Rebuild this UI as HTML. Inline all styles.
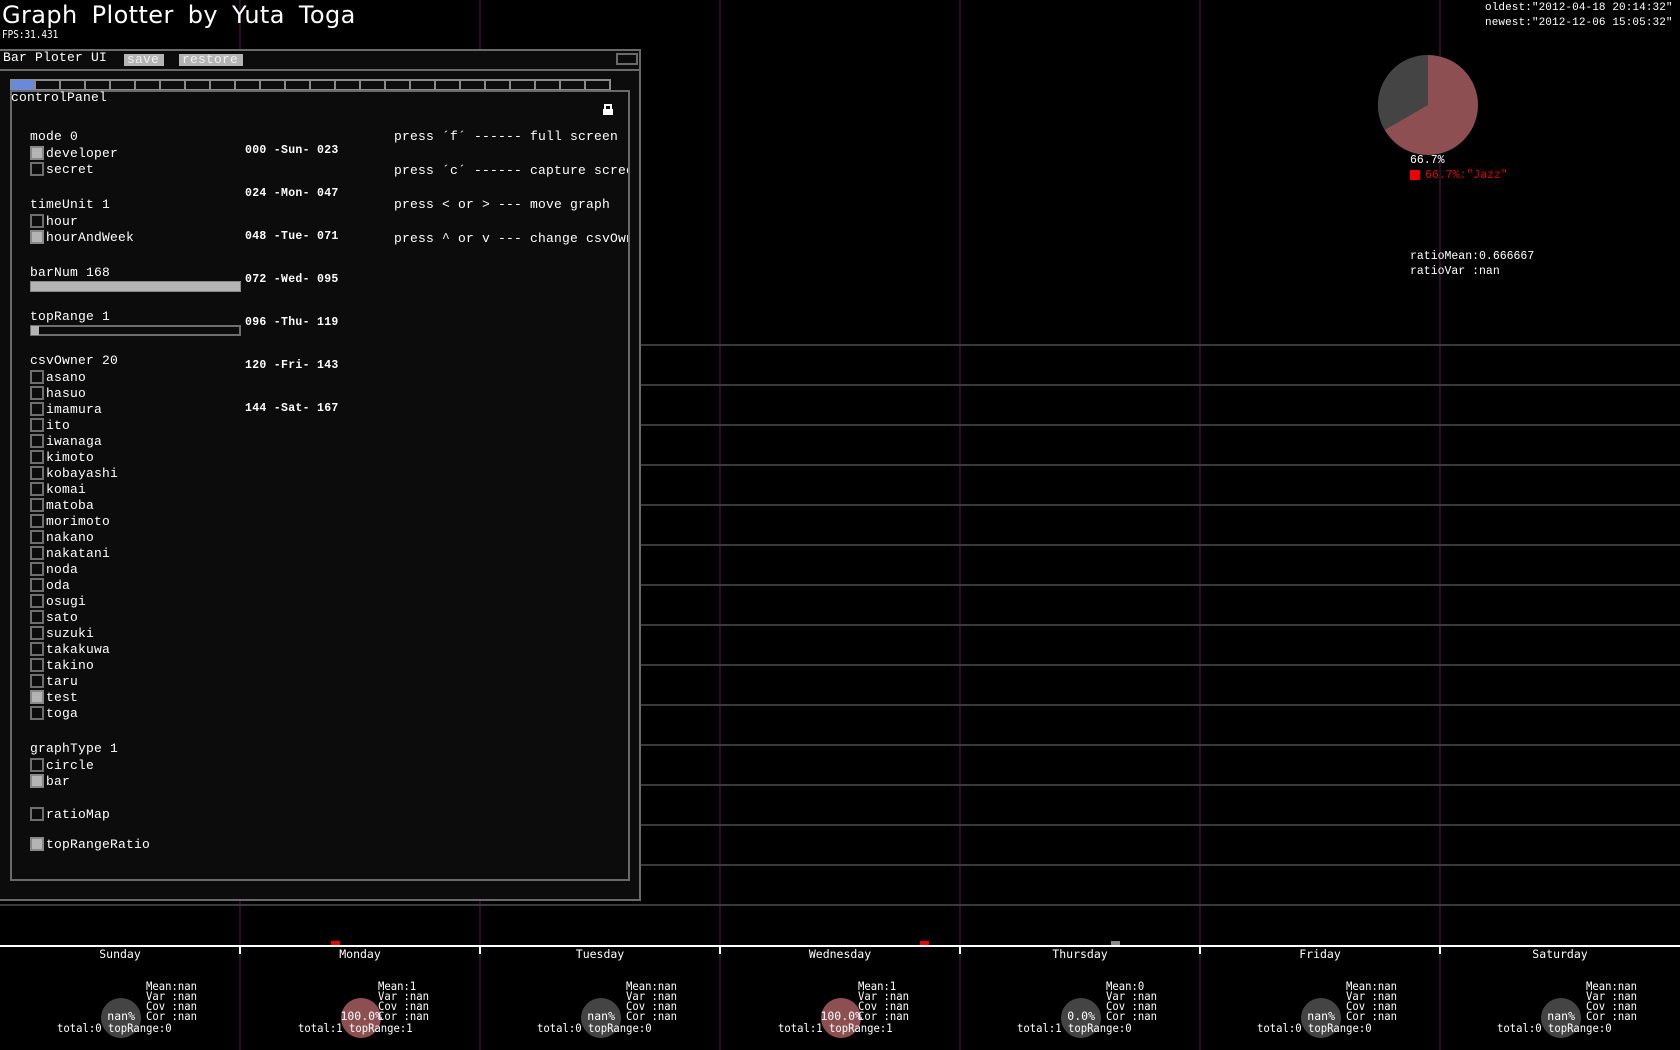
<!DOCTYPE html>
<html><head><meta charset="utf-8"><style>
*{margin:0;padding:0;box-sizing:border-box}
body{width:1680px;height:1050px;background:#000;position:relative;overflow:hidden;color:#fff;font-family:"Liberation Mono","DejaVu Sans Mono",monospace}
.a{position:absolute;white-space:pre}
.vl{position:absolute;top:0;width:2px;height:1050px;background:#2e0a2e}
.hl{position:absolute;height:2px;background:#3a3a3a}
.t{font-size:13px;line-height:14px;letter-spacing:0.2px}
.cb{position:absolute;width:14px;height:14px;border:2px solid #6e6e6e;background:#0c0c0c}
.cb.on{background:#b4b4b4;border-color:#888}
.m{font-size:11.5px;line-height:14px;font-weight:bold;letter-spacing:0.3px}
.s{font-size:11.5px;line-height:10px;font-family:"DejaVu Sans Mono","Liberation Mono",monospace;transform:scaleX(0.92);transform-origin:left top}
.d{position:absolute;top:948px;width:240px;text-align:center;font-size:11.5px;line-height:12px;font-family:"DejaVu Sans Mono","Liberation Mono",monospace}
.p{position:absolute;top:1011px;width:100px;text-align:right;font-size:11.5px;line-height:10px;font-family:"DejaVu Sans Mono","Liberation Mono",monospace}
</style></head><body>
<div class="vl" style="left:239px"></div><div class="vl" style="left:479px"></div><div class="vl" style="left:719px"></div><div class="vl" style="left:959px"></div><div class="vl" style="left:1199px"></div><div class="vl" style="left:1439px"></div>

<div class="hl" style="left:640px;width:1040px;top:344px"></div>
<div class="hl" style="left:640px;width:1040px;top:384px"></div>
<div class="hl" style="left:640px;width:1040px;top:424px"></div>
<div class="hl" style="left:640px;width:1040px;top:464px"></div>
<div class="hl" style="left:640px;width:1040px;top:504px"></div>
<div class="hl" style="left:640px;width:1040px;top:544px"></div>
<div class="hl" style="left:640px;width:1040px;top:584px"></div>
<div class="hl" style="left:640px;width:1040px;top:624px"></div>
<div class="hl" style="left:640px;width:1040px;top:664px"></div>
<div class="hl" style="left:640px;width:1040px;top:704px"></div>
<div class="hl" style="left:640px;width:1040px;top:744px"></div>
<div class="hl" style="left:640px;width:1040px;top:784px"></div>
<div class="hl" style="left:640px;width:1040px;top:824px"></div>
<div class="hl" style="left:640px;width:1040px;top:864px"></div>
<div class="hl" style="left:0;width:1680px;top:904px"></div>

<div class="a" style="left:2px;top:0;font-family:'DejaVu Sans','Liberation Sans',sans-serif;font-size:24px;line-height:30px;word-spacing:6px;letter-spacing:0.4px">Graph Plotter by Yuta Toga</div>
<div class="a" style="left:2px;top:29px;font-size:11px;line-height:12px;font-family:'DejaVu Sans Mono',monospace;transform:scaleX(0.85);transform-origin:left top">FPS:31.431</div>

<div class="a" style="left:0;top:49px;width:641px;height:852px;border:2px solid #6a6a6a;border-left:none;background:#0c0c0c"></div>
<div class="a" style="left:0;top:69px;width:640px;height:2px;background:#6a6a6a"></div>
<div class="a t" style="left:3px;top:51px">Bar Ploter UI</div>
<div class="a t" style="left:124px;top:54px;width:40px;height:12px;background:#b4b4b4;color:#eee;line-height:12px;padding-left:3px">save</div>
<div class="a t" style="left:179px;top:54px;width:64px;height:12px;background:#b4b4b4;color:#eee;line-height:12px;padding-left:3px">restore</div>
<div class="a" style="left:616px;top:53px;width:22px;height:12px;border:2px solid #6a6a6a"></div>
<svg class="a" style="left:10px;top:79px" width="602" height="12">
<rect x="1" y="1" width="599" height="10" fill="#0c0c0c" stroke="#8a8a8a" stroke-width="2"/>
<rect x="1" y="1" width="24" height="10" fill="#6a8ad8"/>
<g stroke="#8a8a8a" stroke-width="2">
<line x1="25" y1="0" x2="25" y2="12"/><line x1="50" y1="0" x2="50" y2="12"/><line x1="75" y1="0" x2="75" y2="12"/><line x1="100" y1="0" x2="100" y2="12"/><line x1="125" y1="0" x2="125" y2="12"/><line x1="150" y1="0" x2="150" y2="12"/><line x1="175" y1="0" x2="175" y2="12"/><line x1="200" y1="0" x2="200" y2="12"/><line x1="225" y1="0" x2="225" y2="12"/><line x1="250" y1="0" x2="250" y2="12"/><line x1="275" y1="0" x2="275" y2="12"/><line x1="300" y1="0" x2="300" y2="12"/><line x1="325" y1="0" x2="325" y2="12"/><line x1="350" y1="0" x2="350" y2="12"/><line x1="375" y1="0" x2="375" y2="12"/><line x1="400" y1="0" x2="400" y2="12"/><line x1="425" y1="0" x2="425" y2="12"/><line x1="450" y1="0" x2="450" y2="12"/><line x1="475" y1="0" x2="475" y2="12"/><line x1="500" y1="0" x2="500" y2="12"/><line x1="525" y1="0" x2="525" y2="12"/><line x1="550" y1="0" x2="550" y2="12"/><line x1="575" y1="0" x2="575" y2="12"/>
</g></svg>
<div class="a" style="left:10px;top:90px;width:620px;height:791px;border:2px solid #6a6a6a;background:#0c0c0c"></div>
<div class="a t" style="left:11px;top:91px">controlPanel</div>
<svg class="a" style="left:601px;top:103px" width="14" height="13"><rect x="2" y="6" width="10" height="6" fill="#fff"/><path d="M4 6 V2 H10 V6" stroke="#fff" stroke-width="2" fill="none"/></svg>

<div class="a t" style="left:30px;top:130px">mode 0</div>
<div class="cb on" style="left:30px;top:146px"></div><div class="a t" style="left:46px;top:147px">developer</div>
<div class="cb" style="left:30px;top:162px"></div><div class="a t" style="left:46px;top:163px">secret</div>
<div class="a t" style="left:30px;top:198px">timeUnit 1</div>
<div class="cb" style="left:30px;top:214px"></div><div class="a t" style="left:46px;top:215px">hour</div>
<div class="cb on" style="left:30px;top:230px"></div><div class="a t" style="left:46px;top:231px">hourAndWeek</div>
<div class="a t" style="left:30px;top:266px">barNum 168</div>
<div class="a" style="left:30px;top:281px;width:211px;height:11px;border:1px solid #888;background:#b4b4b4"></div>
<div class="a t" style="left:30px;top:310px">topRange 1</div>
<div class="a" style="left:30px;top:325px;width:211px;height:11px;border:2px solid #6e6e6e"></div>
<div class="a" style="left:31px;top:326px;width:8px;height:9px;background:#b4b4b4"></div>
<div class="a t" style="left:30px;top:354px">csvOwner 20</div>

<div class="cb" style="left:30px;top:370px"></div><div class="a t" style="left:46px;top:371px">asano</div>
<div class="cb" style="left:30px;top:386px"></div><div class="a t" style="left:46px;top:387px">hasuo</div>
<div class="cb" style="left:30px;top:402px"></div><div class="a t" style="left:46px;top:403px">imamura</div>
<div class="cb" style="left:30px;top:418px"></div><div class="a t" style="left:46px;top:419px">ito</div>
<div class="cb" style="left:30px;top:434px"></div><div class="a t" style="left:46px;top:435px">iwanaga</div>
<div class="cb" style="left:30px;top:450px"></div><div class="a t" style="left:46px;top:451px">kimoto</div>
<div class="cb" style="left:30px;top:466px"></div><div class="a t" style="left:46px;top:467px">kobayashi</div>
<div class="cb" style="left:30px;top:482px"></div><div class="a t" style="left:46px;top:483px">komai</div>
<div class="cb" style="left:30px;top:498px"></div><div class="a t" style="left:46px;top:499px">matoba</div>
<div class="cb" style="left:30px;top:514px"></div><div class="a t" style="left:46px;top:515px">morimoto</div>
<div class="cb" style="left:30px;top:530px"></div><div class="a t" style="left:46px;top:531px">nakano</div>
<div class="cb" style="left:30px;top:546px"></div><div class="a t" style="left:46px;top:547px">nakatani</div>
<div class="cb" style="left:30px;top:562px"></div><div class="a t" style="left:46px;top:563px">noda</div>
<div class="cb" style="left:30px;top:578px"></div><div class="a t" style="left:46px;top:579px">oda</div>
<div class="cb" style="left:30px;top:594px"></div><div class="a t" style="left:46px;top:595px">osugi</div>
<div class="cb" style="left:30px;top:610px"></div><div class="a t" style="left:46px;top:611px">sato</div>
<div class="cb" style="left:30px;top:626px"></div><div class="a t" style="left:46px;top:627px">suzuki</div>
<div class="cb" style="left:30px;top:642px"></div><div class="a t" style="left:46px;top:643px">takakuwa</div>
<div class="cb" style="left:30px;top:658px"></div><div class="a t" style="left:46px;top:659px">takino</div>
<div class="cb" style="left:30px;top:674px"></div><div class="a t" style="left:46px;top:675px">taru</div>
<div class="cb on" style="left:30px;top:690px"></div><div class="a t" style="left:46px;top:691px">test</div>
<div class="cb" style="left:30px;top:706px"></div><div class="a t" style="left:46px;top:707px">toga</div>

<div class="a t" style="left:30px;top:742px">graphType 1</div>
<div class="cb" style="left:30px;top:758px"></div><div class="a t" style="left:46px;top:759px">circle</div>
<div class="cb on" style="left:30px;top:774px"></div><div class="a t" style="left:46px;top:775px">bar</div>
<div class="cb" style="left:30px;top:807px"></div><div class="a t" style="left:46px;top:808px">ratioMap</div>
<div class="cb on" style="left:30px;top:837px"></div><div class="a t" style="left:46px;top:838px">topRangeRatio</div>

<div class="a m" style="left:245px;top:144px">000 -Sun- 023</div>
<div class="a m" style="left:245px;top:187px">024 -Mon- 047</div>
<div class="a m" style="left:245px;top:230px">048 -Tue- 071</div>
<div class="a m" style="left:245px;top:273px">072 -Wed- 095</div>
<div class="a m" style="left:245px;top:316px">096 -Thu- 119</div>
<div class="a m" style="left:245px;top:359px">120 -Fri- 143</div>
<div class="a m" style="left:245px;top:402px">144 -Sat- 167</div>

<div class="a" style="left:394px;top:130px;width:234px;overflow:hidden;white-space:normal"><div class="t" style="height:34px;white-space:pre">press ´f´ ------ full screen</div><div class="t" style="height:34px;white-space:pre">press ´c´ ------ capture screen</div><div class="t" style="height:34px;white-space:pre">press &lt; or &gt; --- move graph</div><div class="t" style="height:34px;white-space:pre">press ^ or v --- change csvOwner</div></div>

<div class="a" style="left:1485px;top:1px;font-size:11px;line-height:15px;letter-spacing:0.1px">oldest:"2012-04-18 20:14:32"
newest:"2012-12-06 15:05:32"</div>
<svg class="a" style="left:1376px;top:53px" width="104" height="104">
<circle cx="52" cy="52" r="50" fill="#8e4f52"/>
<path d="M52 52 L52 2 A50 50 0 0 0 8.7 77 Z" fill="#444"/>
</svg>
<div class="a" style="left:1410px;top:154px;font-size:11.5px;line-height:14px">66.7%</div>
<div class="a" style="left:1410px;top:170px;width:10px;height:10px;background:#e00"></div>
<div class="a" style="left:1425px;top:169px;font-size:11.5px;line-height:14px;color:#d00">66.7%:"Jazz"</div>
<div class="a" style="left:1410px;top:249px;font-size:11.5px;line-height:15px">ratioMean:0.666667
ratioVar :nan</div>

<div class="a" style="left:0;top:945px;width:1680px;height:2px;background:#fff"></div>
<div class="a" style="left:239px;top:945px;width:2px;height:9px;background:#fff"></div>
<div class="a" style="left:479px;top:945px;width:2px;height:9px;background:#fff"></div>
<div class="a" style="left:719px;top:945px;width:2px;height:9px;background:#fff"></div>
<div class="a" style="left:959px;top:945px;width:2px;height:9px;background:#fff"></div>
<div class="a" style="left:1199px;top:945px;width:2px;height:9px;background:#fff"></div>
<div class="a" style="left:1439px;top:945px;width:2px;height:9px;background:#fff"></div>
<div class="a" style="left:331px;top:941px;width:9px;height:4px;background:#e00"></div>
<div class="a" style="left:920px;top:941px;width:9px;height:4px;background:#e00"></div>
<div class="a" style="left:1111px;top:941px;width:9px;height:4px;background:#888"></div>

<svg class="a" style="left:0;top:990px" width="1680" height="60">
<circle cx="121" cy="28" r="20" fill="#444"/>
<circle cx="361" cy="28" r="20" fill="#8e4f52"/>
<circle cx="601" cy="28" r="20" fill="#444"/>
<circle cx="841" cy="28" r="20" fill="#8e4f52"/>
<circle cx="1081" cy="28" r="20" fill="#444"/>
<circle cx="1321" cy="28" r="20" fill="#444"/>
<circle cx="1561" cy="28" r="20" fill="#444"/>
</svg>

<div class="d" style="left:0">Sunday</div>
<div class="d" style="left:240px">Monday</div>
<div class="d" style="left:480px">Tuesday</div>
<div class="d" style="left:720px">Wednesday</div>
<div class="d" style="left:960px">Thursday</div>
<div class="d" style="left:1200px">Friday</div>
<div class="d" style="left:1440px">Saturday</div>

<div class="a s" style="left:146px;top:981px">Mean:nan
Var :nan
Cov :nan
Cor :nan</div>
<div class="p" style="left:35px">nan%</div>
<div class="a s" style="left:57px;top:1023px">total:0 topRange:0</div>

<div class="a s" style="left:378px;top:981px">Mean:1
Var :nan
Cov :nan
Cor :nan</div>
<div class="p" style="left:282px">100.0%</div>
<div class="a s" style="left:298px;top:1023px">total:1 topRange:1</div>

<div class="a s" style="left:626px;top:981px">Mean:nan
Var :nan
Cov :nan
Cor :nan</div>
<div class="p" style="left:515px">nan%</div>
<div class="a s" style="left:537px;top:1023px">total:0 topRange:0</div>

<div class="a s" style="left:858px;top:981px">Mean:1
Var :nan
Cov :nan
Cor :nan</div>
<div class="p" style="left:762px">100.0%</div>
<div class="a s" style="left:778px;top:1023px">total:1 topRange:1</div>

<div class="a s" style="left:1106px;top:981px">Mean:0
Var :nan
Cov :nan
Cor :nan</div>
<div class="p" style="left:995px">0.0%</div>
<div class="a s" style="left:1017px;top:1023px">total:1 topRange:0</div>

<div class="a s" style="left:1346px;top:981px">Mean:nan
Var :nan
Cov :nan
Cor :nan</div>
<div class="p" style="left:1235px">nan%</div>
<div class="a s" style="left:1257px;top:1023px">total:0 topRange:0</div>

<div class="a s" style="left:1586px;top:981px">Mean:nan
Var :nan
Cov :nan
Cor :nan</div>
<div class="p" style="left:1475px">nan%</div>
<div class="a s" style="left:1497px;top:1023px">total:0 topRange:0</div>
</body></html>
